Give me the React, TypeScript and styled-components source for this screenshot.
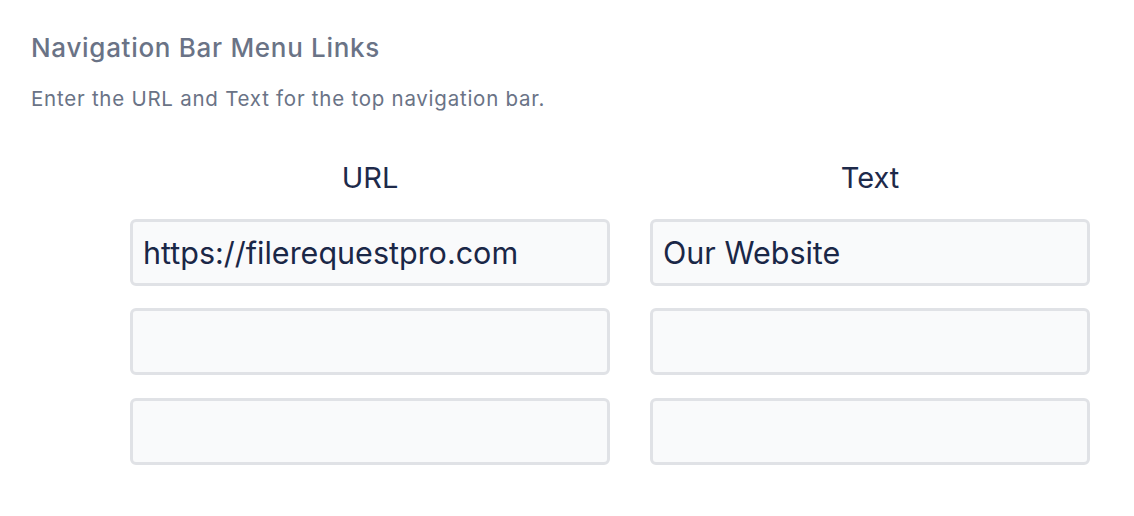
import styled, { createGlobalStyle } from "styled-components"

const GlobalStyle = createGlobalStyle`
    body {
        margin: 0;
        background: #ffffff;
        font-family: Inter, "Noto Sans", Arial, sans-serif;
    }
`

const Page = styled.div`
    padding: 32px 31px 0;
`
const Title = styled.h2`
    margin: 0;
    font-size: 26px;
    font-weight: 500;
    line-height: 32px;
    letter-spacing: 0.7px;
    color: #6a7386;
`
const Description = styled.p`
    margin: 22px 0 0;
    font-size: 20.5px;
    line-height: 26px;
    letter-spacing: 0.75px;
    color: #6a7386;
`
const Grid = styled.div`
    display: grid;
    grid-template-columns: 480px 440px;
    column-gap: 40px;
    row-gap: 22.5px;
    margin: 48px 0 0 99px;
`
const ColumnHead = styled.div`
    text-align: center;
    font-size: 29px;
    line-height: 36px;
    color: #1e2a4a;
    margin-bottom: 0;
`
const Field = styled.input`
    box-sizing: border-box;
    width: 100%;
    height: 67px;
    padding: 0 10px;
    border: 3px solid #e0e2e6;
    border-radius: 6px;
    background: #f9fafb;
    font-family: Inter, "Noto Sans", Arial, sans-serif;
    font-size: 30.5px;
    color: #1a2747;
    outline: none;
`

const links = [
    { url: "https://filerequestpro.com", text: "Our Website" },
    { url: "", text: "" },
    { url: "", text: "" },
]

export default function App() {
    return (
        <>
            <GlobalStyle />
            <Page>
                <Title>Navigation Bar Menu Links</Title>
                <Description>Enter the URL and Text for the top navigation bar.</Description>
                <Grid>
                    <ColumnHead>URL</ColumnHead>
                    <ColumnHead>Text</ColumnHead>
                    {links.map((link, i) => (
                        <>
                            <Field key={`u${i}`} defaultValue={link.url} />
                            <Field key={`t${i}`} defaultValue={link.text} />
                        </>
                    ))}
                </Grid>
            </Page>
        </>
    )
}
